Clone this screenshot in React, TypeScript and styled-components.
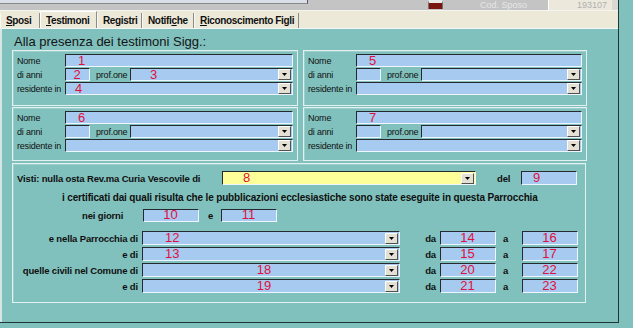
import { Fragment } from "react";
import styled, { createGlobalStyle } from "styled-components";

const TEAL = "#80c0bd";
const FIELD_BLUE = "#a6caf0";
const NUMBER_RED = "#e0103c";

const GlobalStyle = createGlobalStyle`
  html, body {
    margin: 0;
    padding: 0;
  }
  body {
    background: ${TEAL};
    font-family: "Liberation Sans", Arial, sans-serif;
    overflow: hidden;
  }
`;

const Screen = styled.div`
  width: 633px;
  height: 328px;
  display: flex;
  background: ${TEAL};
`;

const Window = styled.div`
  box-sizing: border-box;
  width: 619px;
  height: 323px;
  display: flex;
  flex-direction: column;
  border-right: 1px solid #1d3836;
  border-bottom: 1px solid #1d3836;
`;

/* ---------- top bar ---------- */

const TopBar = styled.div`
  height: 10px;
  display: flex;
  background: #c4c4c4;
  border-bottom: 1px solid #f4f4f0;
`;

const TopField = styled.div`
  box-sizing: border-box;
  width: 308px;
  height: 4px;
  background: #d9dee8;
  border-bottom: 1px solid #8a8a8a;
  border-right: 1px solid #5a5a5a;
`;

const RecordIcon = styled.div`
  box-sizing: border-box;
  margin-left: 120px;
  width: 15px;
  height: 9px;
  background: #7b1410;
  border-top: 3px solid #e8e8e8;
  border-left: 1px solid #707070;
  border-right: 1px solid #707070;
`;

const CodLabel = styled.div`
  width: 105px;
  padding-left: 37px;
  box-sizing: border-box;
  font-size: 9px;
  line-height: 10px;
  color: #e6e6e6;
`;

const CodValue = styled.div`
  box-sizing: border-box;
  width: 64px;
  height: 10px;
  padding-right: 5px;
  background: #ece9dc;
  border-left: 1px solid #ffffff;
  font-size: 9px;
  line-height: 10px;
  text-align: right;
  color: #b0b0b0;
`;

const TopRest = styled.div`
  flex: 1;
  background: #d8d8d4;
`;

/* ---------- tabs ---------- */

const TabStrip = styled.div`
  height: 17px;
  display: flex;
  align-items: flex-end;
  background: #ece9d8;
`;

const Tab = styled.div<{ $w: number; $active?: boolean }>`
  box-sizing: border-box;
  width: ${({ $w }) => $w}px;
  height: ${({ $active }) => ($active ? 17 : 15)}px;
  padding-left: 5px;
  display: flex;
  align-items: center;
  font-size: 10px;
  font-weight: bold;
  letter-spacing: -0.35px;
  color: #101010;
  background: #ece9d8;
  border-left: 1px solid ${({ $active }) => ($active ? "#ffffff" : "#f8f8f4")};
  border-top: ${({ $active }) => ($active ? "1px solid #ffffff" : "none")};
  border-right: 1px solid #8a8a86;

  u {
    text-decoration: underline;
  }
`;

/* ---------- panel ---------- */

const Panel = styled.div`
  flex: 1;
  display: flex;
  flex-direction: column;
  padding-left: 10px;
  background: ${TEAL};
  border-top: 1px solid #f0f8f8;
  border-left: 2px solid #d6e6e4;
`;

const Heading = styled.div`
  height: 21px;
  padding: 6px 0 0 2px;
  box-sizing: border-box;
  font-size: 13px;
  line-height: 14px;
  color: #141414;
`;

const WitnessGrid = styled.div`
  display: grid;
  grid-template-columns: 286px 284px;
  grid-template-rows: 56px 54px;
  column-gap: 5px;
  row-gap: 1px;
`;

const GroupBox = styled.div`
  box-sizing: border-box;
  border: 1px solid #e2f1f0;
  box-shadow: inset 1px 1px 0 #9ccfcc;
`;

const WitnessBox = styled(GroupBox)`
  padding: 3px 4px 0 4px;
  display: flex;
  flex-direction: column;
  gap: 1px;
`;

const Row = styled.div<{ $h?: number; $top?: number }>`
  height: ${({ $h }) => $h || 13}px;
  margin-top: ${({ $top }) => $top || 0}px;
  display: flex;
  align-items: center;
`;

const Label = styled.span<{
  $w?: number;
  $bold?: boolean;
  $pad?: number;
  $right?: boolean;
  $size?: number;
}>`
  box-sizing: border-box;
  flex: none;
  width: ${({ $w }) => ($w ? `${$w}px` : "auto")};
  padding-left: ${({ $pad }) => $pad || 0}px;
  font-size: ${({ $size, $bold }) => $size || ($bold ? 9.5 : 9)}px;
  font-weight: ${({ $bold }) => ($bold ? "bold" : "normal")};
  letter-spacing: ${({ $bold }) => ($bold ? "-0.15px" : "-0.2px")};
  color: #101010;
  white-space: nowrap;
  text-align: ${({ $right }) => ($right ? "right" : "left")};
  padding-right: ${({ $right }) => ($right ? 4 : 0)}px;
`;

const FieldShell = styled.div<{ $w?: number; $h?: number; $bg?: string }>`
  box-sizing: border-box;
  flex: ${({ $w }) => ($w ? "none" : "1")};
  width: ${({ $w }) => ($w ? `${$w}px` : "auto")};
  height: ${({ $h }) => $h || 13}px;
  display: flex;
  align-items: center;
  background: ${({ $bg }) => $bg || FIELD_BLUE};
  border-top: 1px solid #262a30;
  border-left: 1px solid #262a30;
  border-right: 1px solid #eef6ff;
  border-bottom: 1px solid #eef6ff;
  padding-right: 1px;
`;

const Value = styled.span<{ $align?: string; $indent?: number }>`
  flex: 1;
  padding-left: ${({ $indent }) => $indent || 0}px;
  font-size: 13px;
  line-height: 12px;
  color: ${NUMBER_RED};
  text-align: ${({ $align }) => $align || "left"};
  white-space: nowrap;
`;

const DropButton = styled.div`
  box-sizing: border-box;
  flex: none;
  width: 13px;
  height: 11px;
  display: flex;
  align-items: center;
  justify-content: center;
  background: #e4e0d4;
  border: 1px solid;
  border-color: #ffffff #505050 #505050 #ffffff;
`;

type FieldProps = {
  w?: number;
  h?: number;
  value?: string;
  align?: string;
  indent?: number;
  combo?: boolean;
  bg?: string;
};

function Field({ w, h, value, align, indent, combo, bg }: FieldProps) {
  return (
    <FieldShell $w={w} $h={h} $bg={bg}>
      <Value $align={align} $indent={indent}>
        {value}
      </Value>
      {combo && (
        <DropButton>
          <svg width="5" height="3" viewBox="0 0 5 3">
            <polygon points="0,0 5,0 2.5,3" fill="#000" />
          </svg>
        </DropButton>
      )}
    </FieldShell>
  );
}

type WitnessProps = { nome?: string; anni?: string; prof?: string; residente?: string };

function Witness({ nome, anni, prof, residente }: WitnessProps) {
  return (
    <WitnessBox>
      <Row>
        <Label $w={48}>Nome</Label>
        <Field value={nome} indent={12} />
      </Row>
      <Row>
        <Label $w={48}>di anni</Label>
        <Field w={25} value={anni} align="center" />
        <Label $w={40} $pad={6}>
          prof.one
        </Label>
        <Field combo value={prof} indent={19} />
      </Row>
      <Row>
        <Label $w={48}>residente in</Label>
        <Field combo value={residente} indent={9} />
      </Row>
    </WitnessBox>
  );
}

/* ---------- publications box ---------- */

const PubBox = styled(GroupBox)`
  margin-top: 2px;
  width: 574px;
  height: 140px;
  padding-top: 7px;
  display: flex;
  flex-direction: column;
`;

const PubGrid = styled.div`
  margin-top: 9px;
  display: grid;
  grid-template-columns: 129px 258px 40px 56px 26px 56px;
  grid-auto-rows: 14px;
  row-gap: 2px;
  align-items: center;
`;

const parishRows = [
  { label: "e nella Parrocchia di", v: "12", a: "left", i: 22, da: "14", to: "16" },
  { label: "e di", v: "13", a: "left", i: 22, da: "15", to: "17" },
  { label: "quelle civili nel Comune di", v: "18", a: "center", i: 0, da: "20", to: "22" },
  { label: "e di", v: "19", a: "center", i: 0, da: "21", to: "23" },
];

export default function App() {
  return (
    <Screen>
      <GlobalStyle />
      <Window>
        <TopBar>
          <TopField />
          <RecordIcon />
          <CodLabel>Cod. Sposo</CodLabel>
          <CodValue>193107</CodValue>
          <TopRest />
        </TopBar>

        <TabStrip>
          <Tab $w={40}>
            <span>
              <u>S</u>posi
            </span>
          </Tab>
          <Tab $w={57} $active>
            <span>
              <u>T</u>estimoni
            </span>
          </Tab>
          <Tab $w={45}>Registri</Tab>
          <Tab $w={52}>
            <span>
              Notifi<u>c</u>he
            </span>
          </Tab>
          <Tab $w={105}>
            <span>
              <u>R</u>iconoscimento Figli
            </span>
          </Tab>
        </TabStrip>

        <Panel>
          <Heading>Alla presenza dei testimoni Sigg.:</Heading>

          <WitnessGrid>
            <Witness nome="1" anni="2" prof="3" residente="4" />
            <Witness nome="5" />
            <Witness nome="6" />
            <Witness nome="7" />
          </WitnessGrid>

          <PubBox>
            <Row $h={14}>
              <Label $w={209} $pad={4} $bold>
                Visti: nulla osta Rev.ma Curia Vescovile di
              </Label>
              <Field w={254} h={14} combo bg="#ffff99" value="8" indent={20} />
              <Label $w={45} $pad={21} $bold>
                del
              </Label>
              <Field w={56} h={14} value="9" indent={11} />
            </Row>
            <Row $h={14} $top={5}>
              <Label $pad={49} $bold $size={10}>
                i certificati dai quali risulta che le pubblicazioni ecclesiastiche sono state
                eseguite in questa Parrocchia
              </Label>
            </Row>
            <Row $h={14} $top={4}>
              <Label $w={130} $pad={69} $bold>
                nei giorni
              </Label>
              <Field w={56} value="10" align="center" />
              <Label $w={22} $pad={9} $bold>
                e
              </Label>
              <Field w={56} value="11" align="center" />
            </Row>

            <PubGrid>
              {parishRows.map((r, i) => (
                <Fragment key={i}>
                  <Label $bold $right>
                    {r.label}
                  </Label>
                  <Field h={14} combo value={r.v} align={r.a} indent={r.i} />
                  <Label $bold $right>
                    da
                  </Label>
                  <Field h={14} value={r.da} align="center" />
                  <Label $bold $pad={7}>
                    a
                  </Label>
                  <Field h={14} value={r.to} align="center" />
                </Fragment>
              ))}
            </PubGrid>
          </PubBox>
        </Panel>
      </Window>
    </Screen>
  );
}
